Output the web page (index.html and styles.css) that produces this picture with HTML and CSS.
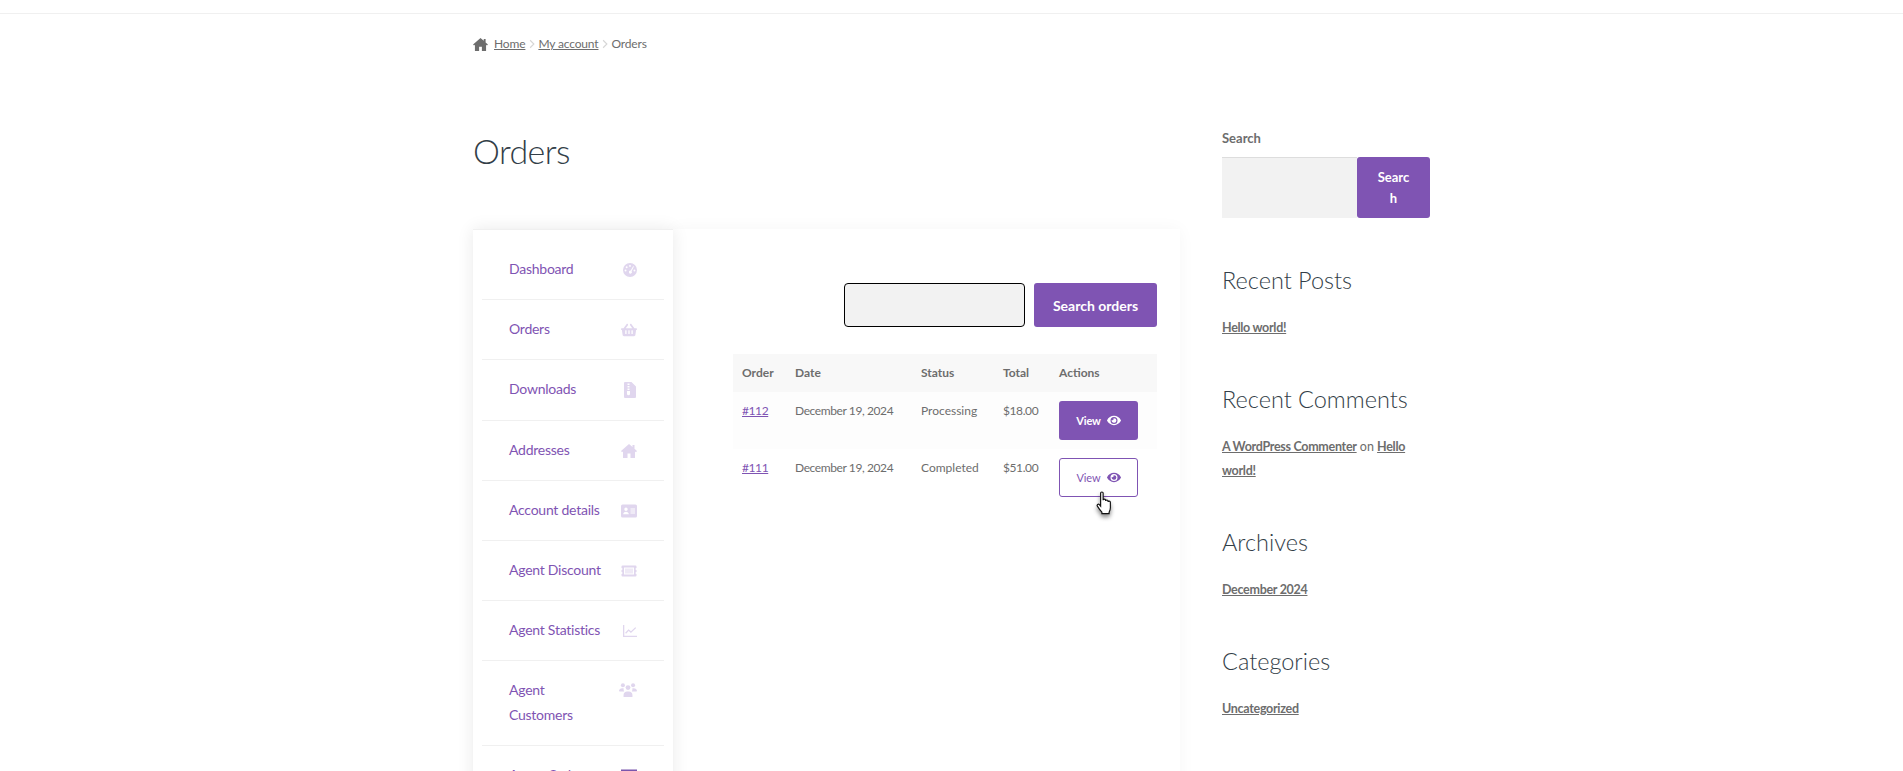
FILE: index.html
```html
<!DOCTYPE html>
<html lang="en">
<head>
  <meta charset="utf-8" />
  <title>Orders</title>
  <meta name="viewport" content="width=device-width, initial-scale=1" />
  <link rel="stylesheet" href="styles.css">
</head>
<body>
  <header class="topbar"></header>

  <div class="wrap">
    <nav class="crumbs">
      <svg class="crumb-home" viewBox="0 0 16 14"><path d="M8 0L0 7l1 1.200 1-.8V14h4.500V9.500h3V14H14V7.400l1 .8L16 7l-2.500-2.200V1h-2v2z"/></svg>
      <a href="#">Home</a>
      <svg class="crumb-sep" viewBox="0 0 8 12"><path d="M1.500 1l5 5-5 5"/></svg>
      <a href="#">My account</a>
      <svg class="crumb-sep" viewBox="0 0 8 12"><path d="M1.500 1l5 5-5 5"/></svg>
      <span>Orders</span>
    </nav>

    <div class="columns">
      <main class="primary">
        <h1>Orders</h1>

        <div class="account">
          <ul class="account-nav">
            <li><a href="#"><span>Dashboard</span>
              <svg class="ico ico-14" viewBox="0 0 16 16"><path fill-rule="evenodd" d="M8 0a8 8 0 1 1 0 16A8 8 0 0 1 8 0zM8 2.200a1.100 1.100 0 1 0 0 2.200 1.100 1.100 0 0 0 0-2.200zM4.200 3.800a1.100 1.100 0 1 0 0 2.200 1.100 1.100 0 0 0 0-2.200zM2.900 7.400a1.100 1.100 0 1 0 0 2.200 1.100 1.100 0 0 0 0-2.200zM13.100 7.400a1.100 1.100 0 1 0 0 2.200 1.100 1.100 0 0 0 0-2.200zM11.600 3.600L8.800 8.700a1.700 1.700 0 1 0 1 .6l2.700-5.200z"/></svg></a></li>
            <li><a href="#"><span>Orders</span>
              <svg class="ico" viewBox="0 0 576 512"><path d="M576 216v16c0 13.255-10.745 24-24 24h-8l-26.113 182.788C514.509 462.435 494.257 480 470.370 480H105.630c-23.887 0-44.139-17.565-47.518-41.212L32 256h-8c-13.255 0-24-10.745-24-24v-16c0-13.255 10.745-24 24-24h67.341l106.780-146.821c10.395-14.292 30.407-17.453 44.701-7.058 14.293 10.395 17.453 30.408 7.058 44.701L170.477 192h235.046L326.120 82.821c-10.395-14.292-7.234-34.306 7.059-44.701 14.291-10.395 34.306-7.235 44.701 7.058L484.659 192H552c13.255 0 24 10.745 24 24zM312 392V280c0-8-10-12-24-12s-24 4-24 12v112c0 8 10 12 24 12s24-4 24-12zm112 0V280c0-8-10-12-24-12s-24 4-24 12v112c0 8 10 12 24 12s24-4 24-12zm-224 0V280c0-8-10-12-24-12s-24 4-24 12v112c0 8 10 12 24 12s24-4 24-12z"/></svg></a></li>
            <li><a href="#"><span>Downloads</span>
              <svg class="ico ico-12" viewBox="0 0 12 16"><path fill-rule="evenodd" d="M1 0h6.500L12 4.500V15a1 1 0 0 1-1 1H1a1 1 0 0 1-1-1V1a1 1 0 0 1 1-1zM3.500 1.500V3h2V1.500zM3.500 4v1.500h2V4zM3.500 6.500V8h2V6.500zM3 9v2.800a1.500 1.500 0 0 0 3 0V9z"/></svg></a></li>
            <li><a href="#"><span>Addresses</span>
              <svg class="ico" viewBox="0 0 16 14"><path d="M8 0L0 7l1 1.200 1-.8V14h4.500V9.500h3V14H14V7.400l1 .8L16 7l-2.500-2.200V1h-2v2z"/></svg></a></li>
            <li><a href="#"><span>Account details</span>
              <svg class="ico" viewBox="0 0 16 13"><path fill-rule="evenodd" d="M1.500 0h13A1.500 1.500 0 0 1 16 1.500v10a1.500 1.500 0 0 1-1.500 1.500h-13A1.500 1.500 0 0 1 0 11.500v-10A1.500 1.500 0 0 1 1.500 0zM5 3a1.700 1.700 0 1 0 0 3.400A1.700 1.700 0 0 0 5 3zM2.200 9.800h5.600c0-1.600-1.200-2.600-2.800-2.600s-2.800 1-2.800 2.600zM9.500 4v1H14V4zM9.500 6v1H14V6zM9.500 8v1H14V8z"/></svg></a></li>
            <li><a href="#"><span>Agent Discount</span>
              <svg class="ico" viewBox="0 0 16 11"><path fill-rule="evenodd" d="M1.500 0h13a1 1 0 0 1 1 1v1.500a1 1 0 0 0 0 2v2a1 1 0 0 0 0 2V10a1 1 0 0 1-1 1h-13a1 1 0 0 1-1-1V8.500a1 1 0 0 0 0-2v-2a1 1 0 0 0 0-2V1a1 1 0 0 1 1-1zM3 2v7h10V2z"/><rect x="4" y="3" width="8" height="5" opacity=".5"/></svg></a></li>
            <li><a href="#"><span>Agent Statistics</span>
              <svg class="ico ico-14" viewBox="0 0 14 12"><path d="M0 0h1.300v10.700H14V12H0z"/><path class="ico-line" d="M2.600 8.300l3-3.200 2.300 2 4.800-4.500"/></svg></a></li>
            <li><a href="#"><span>Agent<br>Customers</span>
              <svg class="ico ico-17" viewBox="0 0 17 13"><circle cx="3.700" cy="2" r="1.900"/><circle cx="13.300" cy="2" r="1.900"/><circle cx="8.500" cy="4.200" r="2.300"/><path d="M0 7.500C0 5.800 1.400 4.800 3.100 4.800c.5 0 1 .1 1.400.3-.3.900-.1 2 .4 2.700H.5zM17 7.500c0-1.700-1.400-2.700-3.100-2.700-.5 0-1 .1-1.400.3.3.9.1 2-.4 2.700h4.400zM4.300 13v-1.800C4.300 9.500 5.900 8 7.500 8h2c1.600 0 3.200 1.500 3.200 3.200V13z"/></svg></a></li>
            <li class="is-dark"><a href="#"><span>Agent Orders</span>
              <svg class="ico" viewBox="0 0 16 13"><path fill-rule="evenodd" d="M0 0h16v13H0zM1.500 4.500V8H7V4.500zM9 4.500V8h5.500V4.500zM1.500 9.200v2.300H7V9.200zM9 9.200v2.300h5.500V9.200z"/></svg></a></li>
          </ul>

          <section class="account-main">
            <form class="order-search">
              <input class="order-input" type="text">
              <button class="btn btn-search" type="button">Search orders</button>
            </form>

            <table class="orders">
              <thead>
                <tr>
                  <th class="col-order">Order</th>
                  <th class="col-date">Date</th>
                  <th class="col-status">Status</th>
                  <th class="col-total">Total</th>
                  <th>Actions</th>
                </tr>
              </thead>
              <tbody>
                <tr>
                  <td class="num"><a href="#">#112</a></td>
                  <td class="num">December 19, 2024</td>
                  <td>Processing</td>
                  <td class="num">$18.00</td>
                  <td><a class="btn btn-view" href="#">View
                    <svg class="eye" viewBox="0 0 576 512"><path d="M572.520 241.400C518.290 135.590 410.930 64 288 64S57.680 135.640 3.480 241.410a32.350 32.350 0 0 0 0 29.190C57.710 376.410 165.070 448 288 448s230.320-71.640 284.520-177.410a32.350 32.350 0 0 0 0-29.190zM288 400a144 144 0 1 1 144-144 143.930 143.930 0 0 1-144 144zm0-240a95.310 95.310 0 0 0-25.310 3.790 47.850 47.850 0 0 1-66.900 66.900A95.780 95.780 0 1 0 288 160z"/></svg></a></td>
                </tr>
                <tr>
                  <td class="num"><a href="#">#111</a></td>
                  <td class="num">December 19, 2024</td>
                  <td>Completed</td>
                  <td class="num">$51.00</td>
                  <td><a class="btn btn-view is-hover" href="#">View
                    <svg class="eye" viewBox="0 0 576 512"><path d="M572.520 241.400C518.290 135.590 410.930 64 288 64S57.680 135.640 3.480 241.410a32.350 32.350 0 0 0 0 29.190C57.710 376.410 165.070 448 288 448s230.320-71.640 284.520-177.410a32.350 32.350 0 0 0 0-29.190zM288 400a144 144 0 1 1 144-144 143.930 143.930 0 0 1-144 144zm0-240a95.310 95.310 0 0 0-25.310 3.790 47.850 47.850 0 0 1-66.900 66.900A95.780 95.780 0 1 0 288 160z"/></svg>
                    <svg class="pointer" viewBox="0 0 18 28"><path d="M5.500 2.200c0-1.600 2.600-1.600 2.600 0v7.300c.2-1.500 2.500-1.500 2.600 0v.8c.2-1.300 2.400-1.300 2.500.1v.9c.3-1.100 2.300-1 2.400.4v5.600c0 2.200-.6 3.300-1.300 4.700v1.500H6.800v-1.500c-1.300-1.400-3-3.600-4.700-6.300-.8-1.300.9-2.800 2.100-1.500l1.300 1.500z"/></svg></a></td>
                </tr>
              </tbody>
            </table>
          </section>
        </div>
      </main>

      <aside class="sidebar">
        <div class="widget widget-search">
          <label class="search-label">Search</label>
          <div class="search-row">
            <input class="search-input" type="text">
            <button class="btn search-btn" type="button">Searc<br>h</button>
          </div>
        </div>
        <div class="widget">
          <h2>Recent Posts</h2>
          <p><a href="#">Hello world!</a></p>
        </div>
        <div class="widget">
          <h2>Recent Comments</h2>
          <p><a href="#">A WordPress Commenter</a> on <a href="#">Hello<br>world!</a></p>
        </div>
        <div class="widget">
          <h2>Archives</h2>
          <p><a href="#">December 2024</a></p>
        </div>
        <div class="widget">
          <h2>Categories</h2>
          <p><a href="#">Uncategorized</a></p>
        </div>
      </aside>
    </div>
  </div>
</body>
</html>
```

FILE: styles.css
```css
:root {
  --purple: #7f54b3;
  --text: #6d6d6d;
  --head: #333e48;
  --line: #f0f0f0;
  --icon: #e0d6ee;
}

* { box-sizing: border-box; margin: 0; padding: 0; }

html, body {
  height: 771px;
  overflow: hidden;
}

body {
  font-family: Lato, "Noto Sans", sans-serif;
  font-size: 13px;
  line-height: 24px;
  color: var(--text);
  background: #fff;
}

a { color: inherit; }

.topbar {
  height: 14px;
  border-bottom: 1px solid var(--line);
}

.wrap {
  width: 957px;
  margin: 0 auto;
}

/* breadcrumb */
.crumbs {
  display: flex;
  align-items: center;
  height: 24px;
  margin-top: 18px;
  font-size: 12px;
  letter-spacing: -.15px;
}

.crumb-home {
  width: 15px;
  height: 13px;
  margin-right: 6px;
  fill: #6d6d6d;
}

.crumb-sep {
  width: 6px;
  height: 10px;
  margin: 0 3.5px;
  fill: none;
  stroke: #d6d6d6;
  stroke-width: 1.5;
}

.columns {
  display: flex;
  gap: 42px;
  padding-top: 70px;
}

.primary { width: 707px; }

h1 {
  font-size: 34px;
  line-height: 50px;
  font-weight: 300;
  letter-spacing: -.6px;
  color: var(--head);
  margin-bottom: 53px;
}

/* account area */
.account {
  display: flex;
  align-items: flex-start;
}

.account-nav {
  width: 200px;
  flex: none;
  list-style: none;
  padding: 10px 9px 0;
  background: #fff;
  box-shadow: 0 0 16px rgba(0,0,0,.09);
  border-top: 1px solid var(--line);
  position: relative;
  z-index: 1;
}

.account-nav li { border-bottom: 1px solid var(--line); }

.account-nav a {
  display: flex;
  justify-content: space-between;
  align-items: flex-start;
  padding: 17px 27px 18px 27px;
  font-size: 14px;
  line-height: 24.2px;
  letter-spacing: -.25px;
  color: var(--purple);
  text-decoration: none;
}

.ico {
  width: 16px;
  height: 16px;
  margin-top: 5px;
  fill: var(--icon);
  flex: none;
}

.ico-14 { width: 14px; height: 14px; margin-top: 6px; }
.ico-12 { width: 12px; height: 16px; margin-right: 1px; }
.ico-17 { width: 18px; height: 14px; margin-top: 5px; }

.ico-line {
  fill: none;
  stroke: var(--icon);
  stroke-width: 1.3;
}

.is-dark .ico { fill: #7b56ad; }

.account-main {
  flex: 1;
  height: 640px;
  padding: 54px 23px 0 60px;
  box-shadow: 0 0 16px rgba(0,0,0,.04);
}

.order-search {
  display: flex;
  justify-content: flex-end;
  gap: 9px;
  margin-bottom: 27px;
}

.order-input {
  width: 181px;
  height: 44px;
  background: #f2f2f2;
  border: 1px solid #000;
  border-radius: 4px;
}

.btn {
  background: var(--purple);
  color: #fff;
  border: 0;
  border-radius: 3px;
  font-family: inherit;
  font-weight: 700;
}

.btn-search {
  width: 123px;
  height: 44px;
  font-size: 14px;
}

/* orders table */
.orders {
  width: 100%;
  border-collapse: collapse;
  table-layout: fixed;
  font-size: 12px;
}

.orders th {
  height: 38px;
  padding: 0 9px;
  text-align: left;
  font-weight: 700;
  background: #f8f8f8;
}

.orders td {
  height: 57px;
  padding: 7px 9px 0;
  vertical-align: top;
}

.orders td.num { letter-spacing: -.4px; }
.orders tbody tr:first-child td { background: #fdfdfd; }
.orders td a:not(.btn) { color: var(--purple); }

.col-order { width: 53px; }
.col-date { width: 126px; }
.col-status { width: 82px; }
.col-total { width: 56px; }

.btn-view {
  position: relative;
  display: flex;
  align-items: center;
  justify-content: center;
  gap: 6px;
  width: 79px;
  height: 39px;
  margin-top: 2px;
  font-size: 11px;
  letter-spacing: -.1px;
  text-decoration: none;
}

.eye {
  width: 14px;
  height: 13px;
  fill: currentColor;
}

.is-hover {
  background: #fff;
  color: var(--purple);
  border: 1px solid var(--purple);
  font-weight: 400;
}

.pointer {
  position: absolute;
  left: 35px;
  top: 32px;
  width: 18px;
  height: 27px;
  fill: #fff;
  stroke: #111;
  stroke-width: 1.2;
  filter: drop-shadow(0 3px 2px rgba(0,0,0,.45));
}

/* sidebar */
.sidebar { width: 208px; }

.widget { margin-bottom: 41.5px; }
.widget-search { margin-bottom: 44px; }

.search-label {
  display: block;
  font-weight: 700;
  margin-bottom: 7px;
}

.search-row { display: flex; }

.search-input {
  width: 135px;
  height: 61px;
  background: #f2f2f2;
  border: 0;
  box-shadow: inset 0 1px 0 #ddd;
}

.search-btn {
  width: 73px;
  height: 61px;
  font-size: 13px;
  line-height: 21px;
}

.widget h2 {
  font-size: 23.5px;
  line-height: 36px;
  font-weight: 300;
  color: var(--head);
  margin-bottom: 17.5px;
}

.widget p {
  font-size: 12.5px;
  line-height: 24px;
}

.widget p a {
  font-weight: 700;
  letter-spacing: -.3px;
}
```
